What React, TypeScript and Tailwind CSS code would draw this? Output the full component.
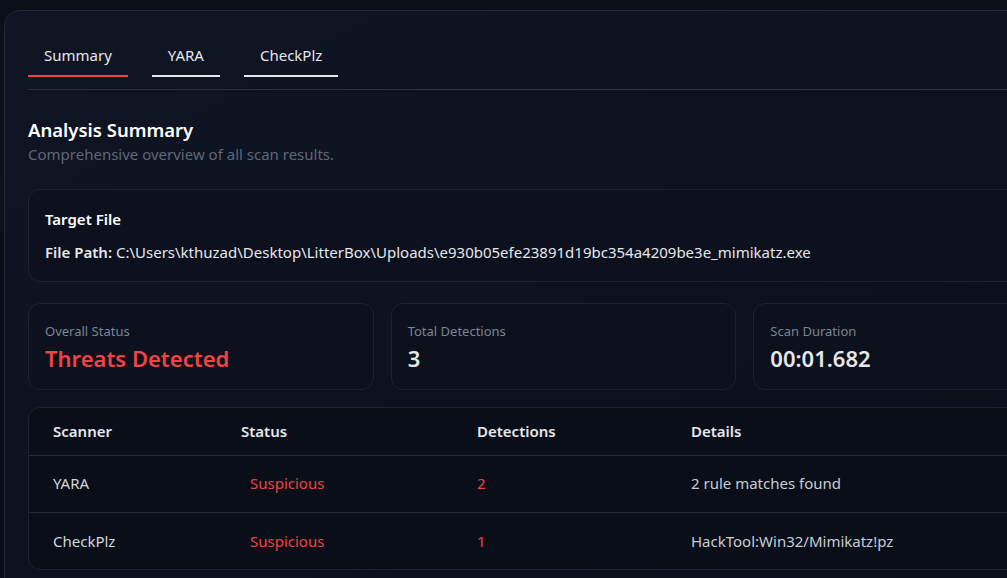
import { useState } from 'react'

type Row = { scanner: string; status: string; detections: number; details: string }

const rows: Row[] = [
  { scanner: 'YARA', status: 'Suspicious', detections: 2, details: '2 rule matches found' },
  { scanner: 'CheckPlz', status: 'Suspicious', detections: 1, details: 'HackTool:Win32/Mimikatz!pz' },
]

const tabs = ['Summary', 'YARA', 'CheckPlz']

function StatCard({ label, value, danger }: { label: string; value: string; danger?: boolean }) {
  return (
    <div className="rounded-xl border border-[#1c2230] bg-[#0c111d] px-4 pt-[17px] pb-[16px]">
      <div className="text-[13px] leading-[20px] text-[#7b8494]">{label}</div>
      <div className={`mt-[2px] text-[22px] leading-[30px] font-semibold ${danger ? 'text-[#ef4444]' : 'text-[#e5e7eb]'}`}>
        {value}
      </div>
    </div>
  )
}

export default function App() {
  const [active, setActive] = useState('Summary')

  return (
    <div
      className="w-[1007px] h-[578px] overflow-hidden bg-[#0b0f19] pl-[4px] pt-[10px] text-[#e5e7eb]"
      style={{ fontFamily: '"Noto Sans", "Open Sans", sans-serif' }}
    >
      <div className="w-[1119px] rounded-tl-2xl border border-[#222834] bg-gradient-to-br from-[#0f1523] to-[#0b0f1a] px-[23px] pt-8 pb-8">
        {/* Tabs */}
        <div className="flex gap-6 border-b border-[#2c323e] pb-3">
          {tabs.map(t => (
            <button
              key={t}
              onClick={() => setActive(t)}
              className={`px-4 pb-2 text-[15px] leading-[24px] text-[#e5e7eb] border-b-2 ${
                active === t ? 'border-[#ef4444]' : 'border-[#e5e7eb]'
              }`}
            >
              {t}
            </button>
          ))}
        </div>

        {/* Heading */}
        <h2 className="mt-[26px] text-[18.5px] leading-[28px] font-semibold text-white">Analysis Summary</h2>
        <p className="text-[15px] leading-[20px] text-[#5f6878]">Comprehensive overview of all scan results.</p>

        {/* Target file */}
        <div className="mt-[25px] rounded-xl border border-[#1c2230] bg-[#0c111d] px-4 pt-[18px] pb-[18px]">
          <div className="text-[15px] leading-[22px] font-semibold text-white">Target File</div>
          <div className="mt-[11px] text-[15px] leading-[22px] text-[#e5e7eb]">
            <span className="font-semibold">File Path:</span>{' '}
            C:\Users\kthuzad\Desktop\LitterBox\Uploads\e930b05efe23891d19bc354a4209be3e_mimikatz.exe
          </div>
        </div>

        {/* Stats */}
        <div className="mt-[21px] grid grid-cols-3 gap-[17px]">
          <StatCard label="Overall Status" value="Threats Detected" danger />
          <StatCard label="Total Detections" value="3" />
          <StatCard label="Scan Duration" value="00:01.682" />
        </div>

        {/* Scanner table */}
        <div className="mt-[17px] rounded-xl border border-[#1c2230] bg-[#0a0e18] overflow-hidden">
          <table className="w-full table-fixed text-left text-[15px]">
            <thead>
              <tr className="h-[47px] border-b border-[#222834]">
                <th className="w-[188px] px-6 font-semibold text-[#e5e7eb]">Scanner</th>
                <th className="w-[236px] px-6 font-semibold text-[#e5e7eb]">Status</th>
                <th className="w-[214px] px-6 font-semibold text-[#e5e7eb]">Detections</th>
                <th className="px-6 font-semibold text-[#e5e7eb]">Details</th>
              </tr>
            </thead>
            <tbody>
              {rows.map((r, i) => (
                <tr key={r.scanner} className={`h-[57px] ${i < rows.length - 1 ? 'border-b border-[#222834]' : ''}`}>
                  <td className="px-6 text-[#d1d5db]">{r.scanner}</td>
                  <td className="px-6">
                    <span className="px-[9px] text-[#ef4444]">{r.status}</span>
                  </td>
                  <td className="px-6 text-[#ef4444]">{r.detections}</td>
                  <td className="px-6 text-[#c7cdd6]">{r.details}</td>
                </tr>
              ))}
            </tbody>
          </table>
        </div>
      </div>
    </div>
  )
}
